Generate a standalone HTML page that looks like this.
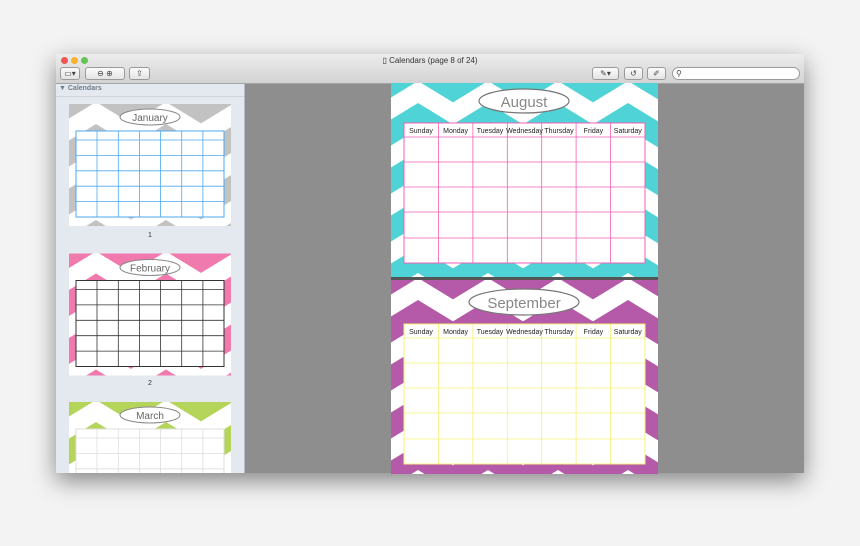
<!DOCTYPE html>
<html><head><style>
body{margin:0;width:860px;height:546px;background:#f3f3f3;position:relative;overflow:hidden;font-family:"Liberation Sans",sans-serif}
.win{position:absolute;left:56px;top:54px;width:748px;height:419px;background:#8e8e8e;box-shadow:0 8px 22px rgba(0,0,0,.45);overflow:hidden}
.tb{position:absolute;left:0;top:0;width:748px;height:29px;background:linear-gradient(#ececec,#d3d3d3);border-bottom:1px solid #a5a5a5}
.dot{position:absolute;top:3px;width:7px;height:7px;border-radius:50%}
.btn{position:absolute;top:13px;height:11px;border:1px solid #9a9a9a;border-radius:3px;background:linear-gradient(#fbfbfb,#e4e4e4);font-size:8px;color:#444;text-align:center;line-height:11px}
.side{position:absolute;left:0;top:30px;width:188px;height:389px;background:#e4e9ef;border-right:1px solid #b8bcc2}
.title{position:absolute;top:2px;left:0;width:748px;text-align:center;font-size:8px;color:#333}
.pg{position:absolute;display:block}
.lbl{position:absolute;font-size:7px;color:#333;width:20px;text-align:center}
</style></head><body>
<svg width="0" height="0" style="position:absolute">
<defs>
<pattern id="chev" patternUnits="userSpaceOnUse" width="70" height="48" x="-8" y="-6">
<path d="M-1,26 L35,4 L71,26 L71,48 L35,26 L-1,48Z" fill="#fff"/>
</pattern>
</defs>
</svg>
<div class="win">
<div class="tb">
<div class="dot" style="left:5px;background:#f0554f"></div>
<div class="dot" style="left:15px;background:#f6b12e"></div>
<div class="dot" style="left:25px;background:#62c554"></div>
<div class="title">▯ Calendars (page 8 of 24)</div>
<div class="btn" style="left:4px;width:18px">▭▾</div>
<div class="btn" style="left:29px;width:38px">⊖ ⊕</div>
<div class="btn" style="left:73px;width:19px">⇪</div>
<div class="btn" style="left:536px;width:25px">✎▾</div>
<div class="btn" style="left:568px;width:17px">↺</div>
<div class="btn" style="left:591px;width:17px">✐</div>
<div class="btn" style="left:616px;border-radius:7px;background:#fff;text-align:left;padding-left:3px;width:123px">⚲</div>
</div>
<div class="side">
<div style="position:absolute;left:3px;top:1px;font-size:7px;font-weight:bold;color:#6f7b8a">▼ Calendars</div>
<div style="position:absolute;left:0;top:12px;width:188px;height:1px;background:#d0d5dc"></div>
</div>
</div>
<svg class="pg" style="left:391px;top:83px" width="267" height="194" viewBox="0 0 267 194" preserveAspectRatio="none">
<rect width="267" height="194" fill="#4fd3d6"/><rect width="267" height="194" fill="url(#chev)"/>
<ellipse cx="133" cy="18" rx="45" ry="12" fill="#fff" stroke="#777" stroke-width="1.2"/>
<text x="133" y="24" text-anchor="middle" font-size="15" fill="#888" font-family="Liberation Sans">August</text>
<rect x="13" y="40" width="241" height="140" fill="#fff" stroke="#f25fb4" stroke-width="1"/>
<g stroke="#f25fb4" stroke-width="0.8"><line x1="13" y1="54" x2="254" y2="54"/><line x1="13" y1="79" x2="254" y2="79"/><line x1="13" y1="104" x2="254" y2="104"/><line x1="13" y1="129" x2="254" y2="129"/><line x1="13" y1="155" x2="254" y2="155"/>
<line x1="47.4" y1="40" x2="47.4" y2="180"/><line x1="81.9" y1="40" x2="81.9" y2="180"/><line x1="116.3" y1="40" x2="116.3" y2="180"/><line x1="150.7" y1="40" x2="150.7" y2="180"/><line x1="185.1" y1="40" x2="185.1" y2="180"/><line x1="219.6" y1="40" x2="219.6" y2="180"/></g>
<g font-size="7" fill="#222" text-anchor="middle" font-family="Liberation Sans"><text x="30" y="50">Sunday</text><text x="64.6" y="50">Monday</text><text x="99" y="50">Tuesday</text><text x="133.5" y="50">Wednesday</text><text x="168" y="50">Thursday</text><text x="202.4" y="50">Friday</text><text x="236.8" y="50">Saturday</text></g>
</svg>
<div style="position:absolute;left:391px;top:277px;width:267px;height:3px;background:#555"></div>
<svg class="pg" style="left:391px;top:280px" width="267" height="194" viewBox="0 0 267 194" preserveAspectRatio="none">
<rect width="267" height="194" fill="#b55aa8"/><rect width="267" height="194" fill="url(#chev)"/>
<ellipse cx="133" cy="22" rx="55" ry="13" fill="#fff" stroke="#777" stroke-width="1.2"/>
<text x="133" y="28" text-anchor="middle" font-size="15" fill="#888" font-family="Liberation Sans">September</text>
<rect x="13" y="44" width="241" height="140" fill="#fff" stroke="#f5f07a" stroke-width="1"/>
<g stroke="#f5f07a" stroke-width="0.8"><line x1="13" y1="58" x2="254" y2="58"/><line x1="13" y1="83" x2="254" y2="83"/><line x1="13" y1="108" x2="254" y2="108"/><line x1="13" y1="133" x2="254" y2="133"/><line x1="13" y1="159" x2="254" y2="159"/>
<line x1="47.4" y1="44" x2="47.4" y2="184"/><line x1="81.9" y1="44" x2="81.9" y2="184"/><line x1="116.3" y1="44" x2="116.3" y2="184"/><line x1="150.7" y1="44" x2="150.7" y2="184"/><line x1="185.1" y1="44" x2="185.1" y2="184"/><line x1="219.6" y1="44" x2="219.6" y2="184"/></g>
<g font-size="7" fill="#222" text-anchor="middle" font-family="Liberation Sans"><text x="30" y="54">Sunday</text><text x="64.6" y="54">Monday</text><text x="99" y="54">Tuesday</text><text x="133.5" y="54">Wednesday</text><text x="168" y="54">Thursday</text><text x="202.4" y="54">Friday</text><text x="236.8" y="54">Saturday</text></g>
</svg>
<svg class="pg" style="left:69px;top:104px" width="162" height="122" viewBox="0 0 162 122">
<rect width="162" height="122" fill="#c2c2c2"/><rect width="162" height="122" fill="url(#chev)"/>
<ellipse cx="81" cy="13" rx="30" ry="8" fill="#fff" stroke="#888"/>
<text x="81" y="17" text-anchor="middle" font-size="10" fill="#666">January</text>
<rect x="7" y="27" width="148" height="86" fill="#fff" stroke="#4da8f0"/>
<g stroke="#4da8f0" stroke-width="0.8"><line x1="7" y1="36" x2="155" y2="36"/><line x1="7" y1="51.4" x2="155" y2="51.4"/><line x1="7" y1="66.8" x2="155" y2="66.8"/><line x1="7" y1="82.2" x2="155" y2="82.2"/><line x1="7" y1="97.6" x2="155" y2="97.6"/>
<line x1="28" y1="27" x2="28" y2="113"/><line x1="49.3" y1="27" x2="49.3" y2="113"/><line x1="70.4" y1="27" x2="70.4" y2="113"/><line x1="91.6" y1="27" x2="91.6" y2="113"/><line x1="112.7" y1="27" x2="112.7" y2="113"/><line x1="133.9" y1="27" x2="133.9" y2="113"/></g>
</svg>
<div class="lbl" style="left:140px;top:232px">1</div>
<svg class="pg" style="left:69px;top:253px" width="162" height="123" viewBox="0 0 162 122">
<rect width="162" height="122" fill="#f07aae"/><rect width="162" height="122" fill="url(#chev)"/>
<ellipse cx="81" cy="14" rx="30" ry="8" fill="#fff" stroke="#888"/>
<text x="81" y="18" text-anchor="middle" font-size="10" fill="#666">February</text>
<rect x="7" y="27" width="148" height="86" fill="#fff" stroke="#333"/>
<g stroke="#333" stroke-width="0.8"><line x1="7" y1="36" x2="155" y2="36"/><line x1="7" y1="51.4" x2="155" y2="51.4"/><line x1="7" y1="66.8" x2="155" y2="66.8"/><line x1="7" y1="82.2" x2="155" y2="82.2"/><line x1="7" y1="97.6" x2="155" y2="97.6"/>
<line x1="28" y1="27" x2="28" y2="113"/><line x1="49.3" y1="27" x2="49.3" y2="113"/><line x1="70.4" y1="27" x2="70.4" y2="113"/><line x1="91.6" y1="27" x2="91.6" y2="113"/><line x1="112.7" y1="27" x2="112.7" y2="113"/><line x1="133.9" y1="27" x2="133.9" y2="113"/></g>
</svg>
<div class="lbl" style="left:140px;top:380px">2</div>
<svg class="pg" style="left:69px;top:402px" width="162" height="71" viewBox="0 0 162 71">
<rect width="162" height="122" fill="#b5d45a"/><rect width="162" height="122" fill="url(#chev)"/>
<ellipse cx="81" cy="13" rx="30" ry="8" fill="#fff" stroke="#888"/>
<text x="81" y="17" text-anchor="middle" font-size="10" fill="#666">March</text>
<rect x="7" y="27" width="148" height="86" fill="#fff" stroke="#ddd"/>
<g stroke="#ddd" stroke-width="0.8"><line x1="7" y1="36" x2="155" y2="36"/><line x1="7" y1="51.4" x2="155" y2="51.4"/><line x1="7" y1="66.8" x2="155" y2="66.8"/>
<line x1="28" y1="27" x2="28" y2="113"/><line x1="49.3" y1="27" x2="49.3" y2="113"/><line x1="70.4" y1="27" x2="70.4" y2="113"/><line x1="91.6" y1="27" x2="91.6" y2="113"/><line x1="112.7" y1="27" x2="112.7" y2="113"/><line x1="133.9" y1="27" x2="133.9" y2="113"/></g>
</svg>
</body></html>
